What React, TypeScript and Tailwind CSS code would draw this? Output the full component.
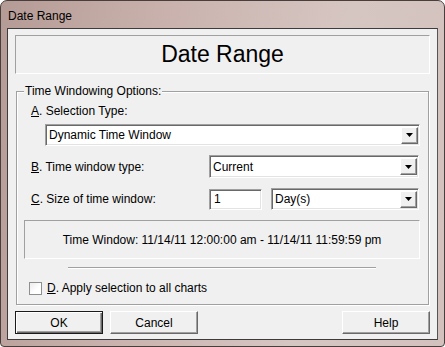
import React from "react";

const ui = "font-['Liberation_Sans',Arial,sans-serif]";

function Arrow() {
  return (
    <div className="flex h-[17px] w-[17px] shrink-0 items-center justify-center border border-t-white border-l-white border-r-[#696969] border-b-[#696969] bg-[#f0f0f0] shadow-[inset_-1px_-1px_0_#a0a0a0]">
      <svg width="7" height="4" viewBox="0 0 7 4">
        <path d="M0 0h7L3.5 4z" fill="#000" />
      </svg>
    </div>
  );
}

function Select({ value, className }: { value: string; className: string }) {
  return (
    <div
      className={
        "flex items-center justify-between border border-t-[#a0a0a0] border-l-[#a0a0a0] border-r-white border-b-white bg-white pl-[3px] pr-[1px] shadow-[inset_1px_1px_0_#696969,inset_-1px_-1px_0_#e3e3e3] " +
        className
      }
    >
      <span className="text-[12px] leading-[14px] text-black">{value}</span>
      <Arrow />
    </div>
  );
}

function Btn({ label, isDefault }: { label: string; isDefault?: boolean }) {
  return (
    <button
      className={
        "flex h-[23px] w-[88px] items-center justify-center bg-[#f0f0f0] text-[12px] text-black " +
        (isDefault
          ? "border border-[#1a1a1a] shadow-[inset_1px_1px_0_#fff,inset_-1px_-1px_0_#696969,inset_-2px_-2px_0_#a0a0a0]"
          : "border border-t-white border-l-white border-r-[#696969] border-b-[#696969] shadow-[inset_-1px_-1px_0_#a0a0a0]")
      }
    >
      {label}
    </button>
  );
}

export default function App() {
  return (
    <div
      className={
        "flex h-[347px] w-[445px] flex-col overflow-hidden rounded-t-[7px] rounded-b-[4px] border border-[#4a3e3c] bg-[linear-gradient(100deg,#b59b96_0%,#cab3ae_35%,#d6c6c2_70%,#d2c1bd_100%)] " +
        ui
      }
    >
      <div className="flex h-[27px] shrink-0 items-center pl-[7px] pt-[2px] text-[12px] text-black">
        Date Range
      </div>
      <div className="mx-[6px] flex h-[312px] flex-col border border-[#3c3c3c] border-r-[#555] bg-[#f0f0f0]">
        <div className="ml-[7px] mt-[6px] flex h-[39px] w-[415px] items-center justify-center border border-t-[#a0a0a0] border-l-[#a0a0a0] border-r-white border-b-white text-[23px] text-black">
          Date Range
        </div>

        <div className="relative ml-[8px] mt-[17px] w-[413px] border border-[#a0a0a0] shadow-[inset_1px_1px_0_#fff,1px_1px_0_#fff]">
          <span className="absolute left-[7px] top-[-8px] bg-[#f0f0f0] px-[1px] text-[12px] leading-[14px] text-black">
            Time Windowing Options:
          </span>
          <div className="ml-[14px] mt-[12px] text-[12px] leading-[14px] text-black">
            <span className="underline">A</span>. Selection Type:
          </div>
          <Select value="Dynamic Time Window" className="ml-[28px] mt-[6px] h-[22px] w-[375px]" />

          <div className="mt-[9px] flex items-center pl-[14px]">
            <div className="w-[178px] text-[12px] leading-[14px] text-black">
              <span className="underline">B</span>. Time window type:
            </div>
            <Select value="Current" className="h-[23px] w-[210px]" />
          </div>

          <div className="mt-[10px] flex items-center pl-[14px]">
            <div className="w-[178px] text-[12px] leading-[14px] text-black">
              <span className="underline">C</span>. Size of time window:
            </div>
            <div className="flex h-[21px] w-[53px] items-center border border-t-[#a0a0a0] border-l-[#a0a0a0] border-r-white border-b-white bg-white pl-[4px] text-[12px] text-black shadow-[inset_1px_1px_0_#696969,inset_-1px_-1px_0_#e3e3e3]">
              1
            </div>
            <Select value="Day(s)" className="ml-[9px] h-[22px] w-[148px]" />
          </div>

          <div className="ml-[7px] mt-[10px] flex h-[39px] w-[396px] items-center justify-center border border-t-[#a0a0a0] border-l-[#a0a0a0] border-r-white border-b-white text-[12px] text-black">
            Time Window: 11/14/11 12:00:00 am - 11/14/11 11:59:59 pm
          </div>

          <div className="ml-[51px] mt-[8px] h-[2px] w-[308px] border-t border-t-[#a0a0a0] border-b border-b-white" />

          <div className="ml-[12px] mt-[12px] mb-[9px] flex items-center gap-[5px]">
            <div className="h-[13px] w-[13px] border border-[#8e8f8f] bg-[linear-gradient(135deg,#ececec,#ffffff_60%)]" />
            <span className="text-[12px] leading-[14px] text-black">
              <span className="underline">D</span>. Apply selection to all charts
            </span>
          </div>
        </div>

        <div className="mt-[6px] flex items-center px-[7px]">
          <Btn label="OK" isDefault />
          <div className="ml-[7px]">
            <Btn label="Cancel" />
          </div>
          <div className="ml-auto">
            <Btn label="Help" />
          </div>
        </div>
      </div>
    </div>
  );
}
